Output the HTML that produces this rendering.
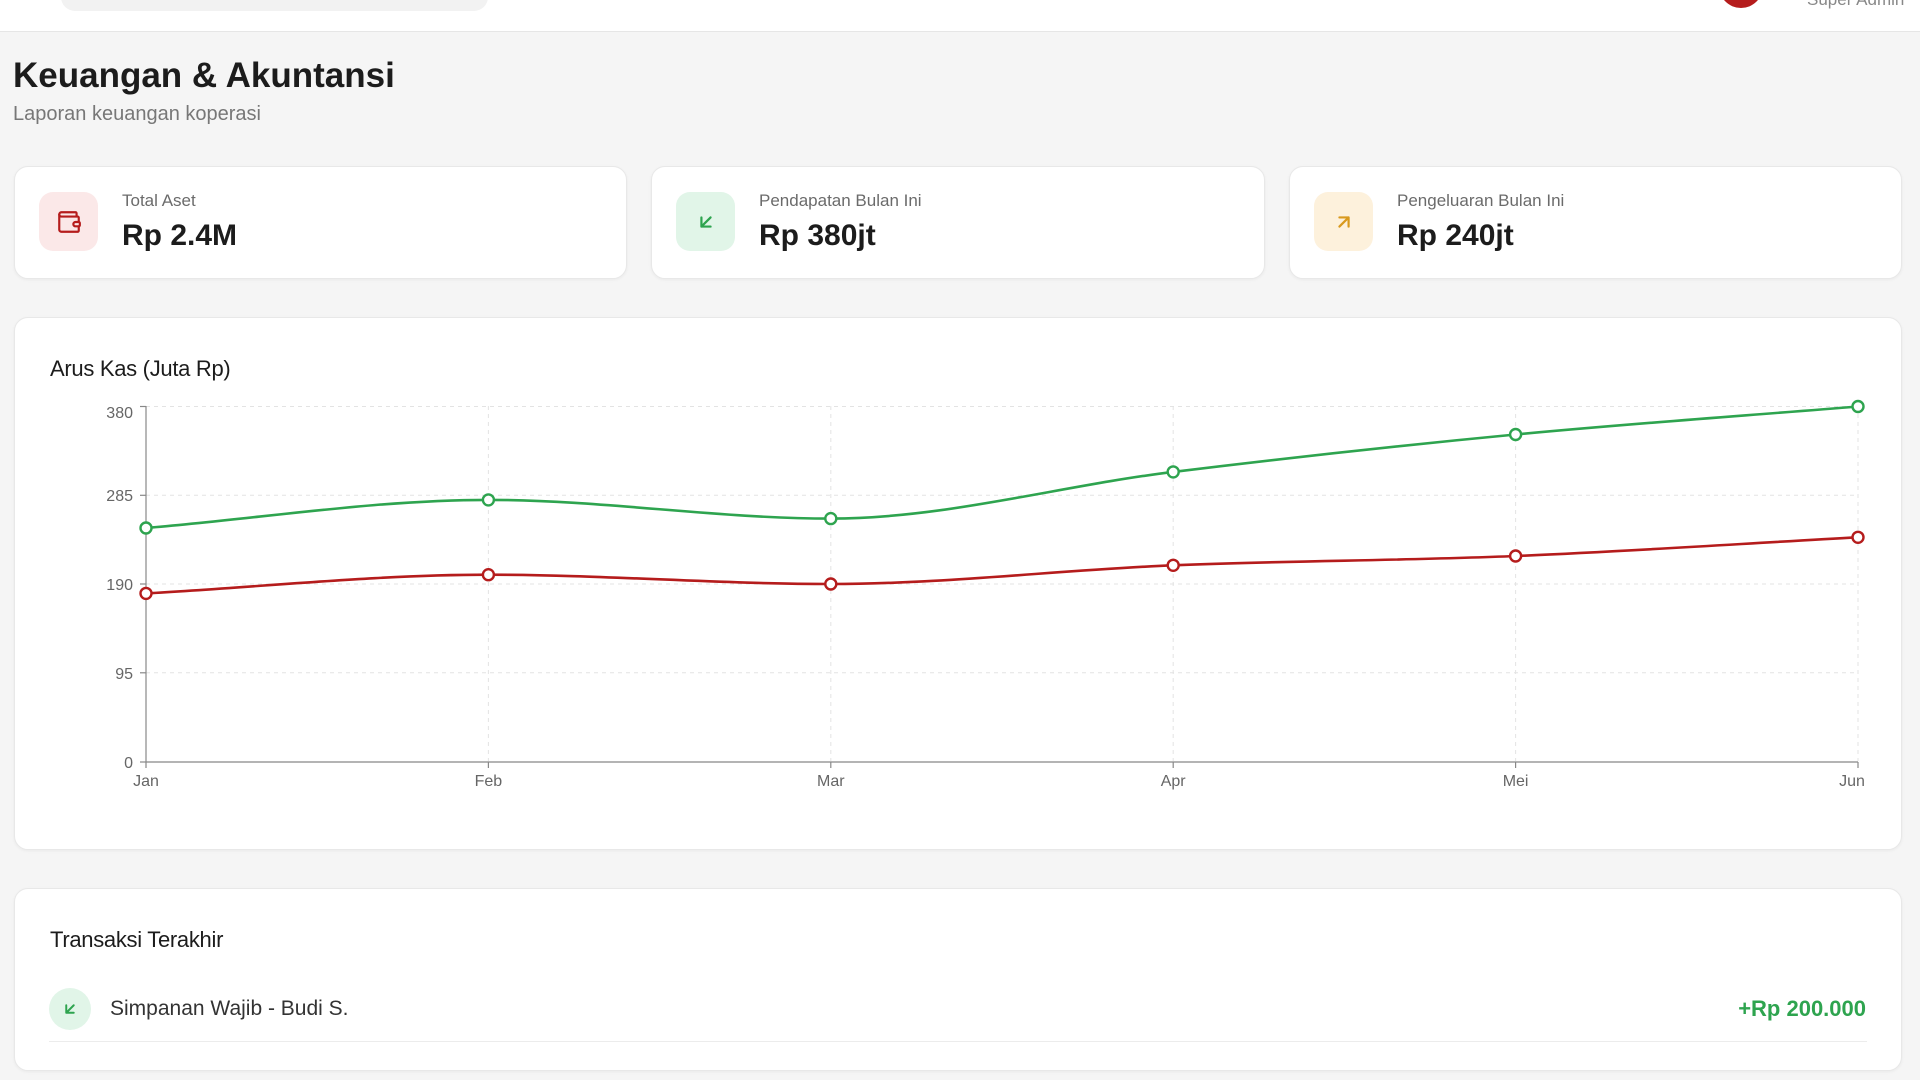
<!DOCTYPE html>
<html><head><meta charset="utf-8">
<style>
*{box-sizing:border-box;margin:0;padding:0}
body{width:1920px;height:1080px;overflow:hidden;background:#f5f5f5;font-family:"Liberation Sans",sans-serif;color:#1c1c1c;position:relative}
.abs{position:absolute}
.card{position:absolute;background:#fff;border:1px solid #e8e8e8;border-radius:14px;box-shadow:0 1px 3px rgba(0,0,0,.05)}
.ib{position:absolute;width:59px;height:59px;border-radius:14px;display:flex;align-items:center;justify-content:center}
.lbl{position:absolute;left:107px;top:24px;font-size:17px;color:#6b6b6b}
.val{position:absolute;left:107px;top:52px;font-size:30px;font-weight:bold;color:#1c1c1c}
</style></head><body>
<div class="abs" style="left:0;top:0;width:1920px;height:32px;background:#fff;border-bottom:1px solid #e6e6e6"></div>
<div class="abs" style="left:61px;top:-20px;width:427px;height:31px;background:#f2f2f2;border-radius:14px"></div>
<div class="abs" style="left:1719px;top:-36px;width:44px;height:44px;background:#b51c1c;border-radius:50%"></div>
<div class="abs" style="left:1807px;top:-10px;font-size:17px;color:#888">Super Admin</div>

<div class="abs" style="left:13px;top:56px;font-size:35px;font-weight:bold;color:#1c1c1c">Keuangan &amp; Akuntansi</div>
<div class="abs" style="left:13px;top:103px;font-size:20px;color:#777">Laporan keuangan koperasi</div>

<div class="card" style="left:14px;top:166px;width:613px;height:113px">
 <div class="ib" style="left:24px;top:25px;background:#fbe8e8">
  <svg width="26" height="26" viewBox="0 0 24 24" fill="none" stroke="#b51c1c" stroke-width="2" stroke-linecap="round" stroke-linejoin="round"><path d="M19 7V4a1 1 0 0 0-1-1H5a2 2 0 0 0 0 4h15a1 1 0 0 1 1 1v4h-3a2 2 0 0 0 0 4h3a1 1 0 0 0 1-1v-2a1 1 0 0 0-1-1"/><path d="M3 5v14a2 2 0 0 0 2 2h15a1 1 0 0 0 1-1v-4"/></svg>
 </div>
 <div class="lbl">Total Aset</div><div class="val">Rp 2.4M</div>
</div>
<div class="card" style="left:651px;top:166px;width:614px;height:113px">
 <div class="ib" style="left:24px;top:25px;background:#e1f5e8">
  <svg width="22" height="22" viewBox="0 0 24 24" fill="none" stroke="#2ea44f" stroke-width="2.4" stroke-linecap="round" stroke-linejoin="round"><path d="M17 7 7 17M17 17H7V7"/></svg>
 </div>
 <div class="lbl">Pendapatan Bulan Ini</div><div class="val">Rp 380jt</div>
</div>
<div class="card" style="left:1289px;top:166px;width:613px;height:113px">
 <div class="ib" style="left:24px;top:25px;background:#fdf1dc">
  <svg width="22" height="22" viewBox="0 0 24 24" fill="none" stroke="#d99a1e" stroke-width="2.4" stroke-linecap="round" stroke-linejoin="round"><path d="M7 17 17 7M7 7h10v10"/></svg>
 </div>
 <div class="lbl">Pengeluaran Bulan Ini</div><div class="val">Rp 240jt</div>
</div>

<div class="card" style="left:14px;top:317px;width:1888px;height:533px"></div>
<div class="abs" style="left:50px;top:356px;font-size:22px;color:#1c1c1c;letter-spacing:-0.3px">Arus Kas (Juta Rp)</div>
<svg class="abs" style="left:0;top:0" width="1920" height="1080" font-family="Liberation Sans, sans-serif" font-size="16" fill="#666">
 <g stroke="#e3e3e3" stroke-dasharray="4 4" stroke-width="1">
  <line x1="146" y1="406.5" x2="1858" y2="406.5"/><line x1="146" y1="495.3" x2="1858" y2="495.3"/>
  <line x1="146" y1="584" x2="1858" y2="584"/><line x1="146" y1="672.8" x2="1858" y2="672.8"/>
  <line x1="488.4" y1="406" x2="488.4" y2="761"/><line x1="830.8" y1="406" x2="830.8" y2="761"/>
  <line x1="1173.2" y1="406" x2="1173.2" y2="761"/><line x1="1515.6" y1="406" x2="1515.6" y2="761"/>
  <line x1="1858" y1="406" x2="1858" y2="761"/>
 </g>
 <g stroke="#888" stroke-width="1.2">
  <line x1="146" y1="406" x2="146" y2="762"/><line x1="146" y1="762" x2="1858" y2="762"/>
  <line x1="140" y1="406.5" x2="146" y2="406.5"/><line x1="140" y1="495.3" x2="146" y2="495.3"/>
  <line x1="140" y1="584" x2="146" y2="584"/><line x1="140" y1="672.8" x2="146" y2="672.8"/><line x1="140" y1="762" x2="146" y2="762"/>
  <line x1="146" y1="762" x2="146" y2="768"/><line x1="488.4" y1="762" x2="488.4" y2="768"/><line x1="830.8" y1="762" x2="830.8" y2="768"/>
  <line x1="1173.2" y1="762" x2="1173.2" y2="768"/><line x1="1515.6" y1="762" x2="1515.6" y2="768"/><line x1="1858" y1="762" x2="1858" y2="768"/>
 </g>
 <g text-anchor="end">
  <text x="133" y="418">380</text><text x="133" y="501">285</text><text x="133" y="590">190</text><text x="133" y="679">95</text><text x="133" y="768">0</text>
 </g>
 <g text-anchor="middle">
  <text x="146" y="786">Jan</text><text x="488.4" y="786">Feb</text><text x="830.8" y="786">Mar</text>
  <text x="1173.2" y="786">Apr</text><text x="1515.6" y="786">Mei</text><text x="1852" y="786">Jun</text>
 </g>
 <path fill="none" stroke="#2ea44f" stroke-width="2.6" d="M146,528 C260.1,518.6 374.3,499.9 488.4,499.9 C602.5,499.9 716.7,518.6 830.8,518.6 C944.9,518.6 1059.1,485.9 1173.2,471.9 C1287.3,457.9 1401.5,445.4 1515.6,434.5 C1629.7,423.6 1743.9,415.8 1858,406.5"/>
 <path fill="none" stroke="#b51c1c" stroke-width="2.6" d="M146,593.4 C260.1,587.2 374.3,574.7 488.4,574.7 C602.5,574.7 716.7,584 830.8,584 C944.9,584 1059.1,570 1173.2,565.3 C1287.3,560.6 1401.5,560.7 1515.6,556 C1629.7,551.3 1743.9,543.5 1858,537.3"/>
 <g fill="#fff" stroke="#2ea44f" stroke-width="2.4">
  <circle cx="146" cy="528" r="5.5"/><circle cx="488.4" cy="499.9" r="5.5"/><circle cx="830.8" cy="518.6" r="5.5"/>
  <circle cx="1173.2" cy="471.9" r="5.5"/><circle cx="1515.6" cy="434.5" r="5.5"/><circle cx="1858" cy="406.5" r="5.5"/>
 </g>
 <g fill="#fff" stroke="#b51c1c" stroke-width="2.4">
  <circle cx="146" cy="593.4" r="5.5"/><circle cx="488.4" cy="574.7" r="5.5"/><circle cx="830.8" cy="584" r="5.5"/>
  <circle cx="1173.2" cy="565.3" r="5.5"/><circle cx="1515.6" cy="556" r="5.5"/><circle cx="1858" cy="537.3" r="5.5"/>
 </g>
</svg>

<div class="card" style="left:14px;top:888px;width:1888px;height:183px"></div>
<div class="abs" style="left:50px;top:927px;font-size:22px;color:#1c1c1c;letter-spacing:-0.3px">Transaksi Terakhir</div>
<div class="abs" style="left:49px;top:988px;width:42px;height:42px;border-radius:50%;background:#e1f5e8;display:flex;align-items:center;justify-content:center">
 <svg width="18" height="18" viewBox="0 0 24 24" fill="none" stroke="#2ea44f" stroke-width="2.6" stroke-linecap="round" stroke-linejoin="round"><path d="M17 7 7 17M17 17H7V7"/></svg>
</div>
<div class="abs" style="left:110px;top:997px;font-size:21px;color:#333">Simpanan Wajib - Budi S.</div>
<div class="abs" style="right:54px;top:996px;font-size:22px;font-weight:bold;color:#2ea44f">+Rp 200.000</div>
<div class="abs" style="left:49px;top:1041px;width:1818px;height:1px;background:#ececec"></div>
</body></html>
